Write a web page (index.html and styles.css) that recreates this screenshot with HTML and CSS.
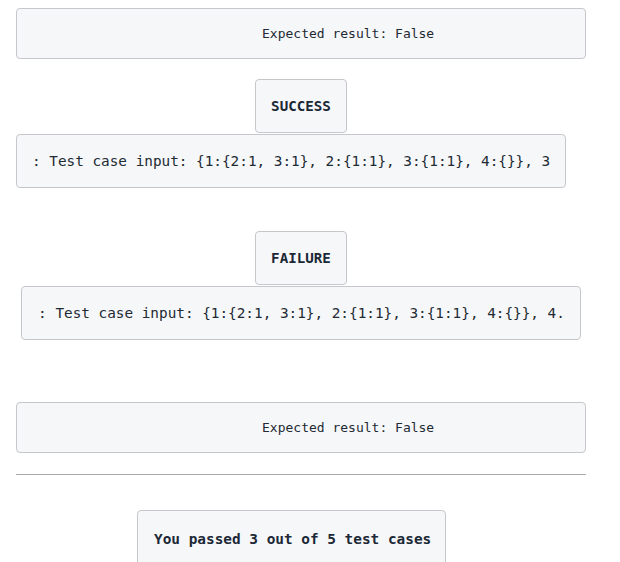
FILE: index.html
```html
<!DOCTYPE html>
<html>
<head>
<meta charset="utf-8">
<link rel="stylesheet" href="styles.css">
</head>
<body>
<main class="page">
  <div class="expected">Expected result: False</div>

  <section class="case case-success">
    <div class="badge">SUCCESS</div>
    <div class="input input-left">: Test case input: {1:{2:1, 3:1}, 2:{1:1}, 3:{1:1}, 4:{}}, 3</div>
  </section>

  <section class="case case-failure">
    <div class="badge">FAILURE</div>
    <div class="input">: Test case input: {1:{2:1, 3:1}, 2:{1:1}, 3:{1:1}, 4:{}}, 4.</div>
  </section>

  <div class="expected expected-last">Expected result: False</div>

  <hr class="divider">

  <div class="summary">You passed 3 out of 5 test cases</div>
</main>
</body>
</html>
```

FILE: styles.css
```css
html, body {
  margin: 0;
  padding: 0;
  background: #ffffff;
}

body {
  font-family: "DejaVu Sans Mono", monospace;
  color: #1f2a36;
}

.page {
  width: 570px;
  margin-left: 16px;
  padding-top: 8px;
  display: flex;
  flex-direction: column;
}

.expected {
  box-sizing: border-box;
  height: 51px;
  padding-left: 245px;
  display: flex;
  align-items: center;
  font-size: 13px;
  background: #f6f7f9;
  border: 1px solid #c6c7cb;
  border-radius: 4px;
  color: #222a33;
}

.case {
  display: flex;
  flex-direction: column;
  align-items: center;
}

.case-success {
  margin-top: 20px;
}

.case-failure {
  margin-top: 43px;
}

.badge {
  box-sizing: border-box;
  width: 92px;
  height: 54px;
  display: flex;
  align-items: center;
  justify-content: center;
  font-size: 14.2px;
  font-weight: bold;
  background: #f6f7f9;
  border: 1px solid #c6c7cb;
  border-radius: 4px;
  color: #1b2836;
  margin-bottom: 1px;
}

.input {
  box-sizing: border-box;
  height: 54px;
  padding: 0 15px 0 16px;
  display: flex;
  align-items: center;
  font-size: 14.35px;
  white-space: pre;
  background: #f6f7f9;
  border: 1px solid #c6c7cb;
  border-radius: 4px;
  color: #222a33;
}

.input-left {
  align-self: flex-start;
  padding-left: 15px;
}

.expected-last {
  margin-top: 62px;
}

.divider {
  width: 100%;
  margin: 21px 0 0 0;
  border: 0;
  border-top: 1px solid #a9a9ab;
  height: 0;
}

.summary {
  align-self: flex-start;
  margin-left: 121px;
  margin-top: 35px;
  box-sizing: border-box;
  width: 309px;
  height: 58px;
  padding: 0 15px 0 16px;
  display: flex;
  align-items: center;
  font-size: 14.4px;
  font-weight: bold;
  white-space: pre;
  background: #f6f7f9;
  border: 1px solid #c6c7cb;
  border-radius: 4px;
  color: #1b2836;
}
```
